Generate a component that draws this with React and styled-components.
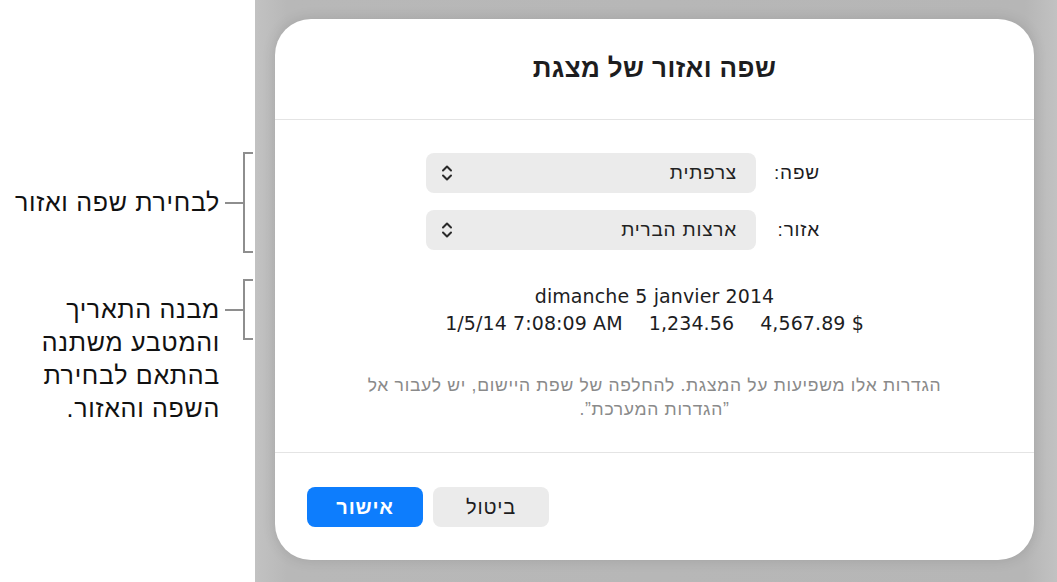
import React from 'react';
import styled, { createGlobalStyle } from 'styled-components';

const Global = createGlobalStyle`
  html, body {
    margin: 0;
    padding: 0;
    background: #ffffff;
  }
  body {
    font-family: "Liberation Sans", Arial, sans-serif;
    color: #1d1d1f;
  }
`;

const Page = styled.div`
  display: flex;
  width: 1057px;
  height: 582px;
  overflow: hidden;
`;

const Notes = styled.div`
  width: 255px;
  flex: none;
  display: flex;
  flex-direction: column;
  gap: 26px;
  padding-top: 152px;
  box-sizing: border-box;
  background: #ffffff;
`;

const NoteRow = styled.div`
  display: flex;
  direction: ltr;
  justify-content: flex-end;
  align-items: flex-start;
  padding-right: 2px;
`;

const NoteText = styled.div`
  direction: rtl;
  text-align: right;
  font-size: 25px;
  letter-spacing: 0.7px;
  line-height: 33px;
  color: #111;
  margin-top: ${({ $h }) => $h / 2 - 16.5}px;
`;

const Tick = styled.div`
  width: 18px;
  height: 2px;
  background: #8e8e8e;
  margin-left: 5px;
  margin-top: ${({ $h }) => $h / 2 - 1}px;
`;

const Bracket = styled.div`
  width: 10px;
  height: ${({ $h }) => $h}px;
  box-sizing: border-box;
  border: 2px solid #8e8e8e;
  border-right: none;
`;

const Stage = styled.div`
  flex: 1;
  background: linear-gradient(90deg, #c2c2c2 0%, #b8b8b8 4%, #b6b6b6 96%, #c2c2c2 100%);
  padding: 19px 23px 22px 20px;
  display: flex;
`;

const Dialog = styled.div`
  direction: rtl;
  flex: 1;
  background: #ffffff;
  border-radius: 36px;
  box-shadow: 0 0 14px rgba(0, 0, 0, 0.12);
  display: flex;
  flex-direction: column;
  overflow: hidden;
`;

const Header = styled.div`
  height: 101px;
  display: flex;
  align-items: center;
  justify-content: center;
  border-bottom: 1px solid #e4e4e4;
  padding-bottom: 2px;
  box-sizing: border-box;
`;

const Title = styled.h1`
  margin: 0;
  font-size: 26px;
  letter-spacing: 0.4px;
  font-weight: 700;
  color: #1d1d1f;
`;

const Body = styled.div`
  display: flex;
  flex-direction: column;
  padding: 33px 0 31px;
  border-bottom: 1px solid #e4e4e4;
`;

const Form = styled.div`
  align-self: flex-start;
  margin-right: 214px;
  display: grid;
  grid-template-columns: 64px 330px;
  grid-auto-rows: 40px;
  row-gap: 17px;
  align-items: center;
`;

const Label = styled.div`
  font-size: 19px;
  letter-spacing: 0.8px;
  text-align: right;
`;

const Popup = styled.div`
  height: 40px;
  border-radius: 8px;
  background: #ebebeb;
  display: flex;
  align-items: center;
  justify-content: space-between;
  padding: 0 19px 0 15px;
  box-sizing: border-box;
  font-size: 19px;
  letter-spacing: 0.8px;
  color: #222;
`;

const Sample = styled.div`
  margin-top: 33px;
  display: flex;
  flex-direction: column;
  align-items: center;
  font-family: "DejaVu Sans", "Liberation Sans", sans-serif;
  font-size: 19px;
  letter-spacing: 0.1px;
  line-height: 27px;
  color: #1d1d1f;
`;

const SampleLine = styled.div`
  direction: ltr;
  display: flex;
  gap: ${({ $gap }) => $gap || 0}px;
`;

const Hint = styled.p`
  margin: 36px 0 0;
  text-align: center;
  font-size: 17.5px;
  letter-spacing: 0.7px;
  line-height: 24px;
  color: #8a8a8a;
`;

const Footer = styled.div`
  display: flex;
  justify-content: flex-end;
  gap: 10px;
  padding: 34px 32px 0;
`;

const Button = styled.button`
  width: 116px;
  height: 40px;
  border: none;
  border-radius: 8px;
  font-family: inherit;
  font-size: 20px;
  letter-spacing: 0.8px;
  font-weight: ${({ $primary }) => ($primary ? 700 : 400)};
  background: ${({ $primary }) => ($primary ? '#0d7dfd' : '#ebebeb')};
  color: ${({ $primary }) => ($primary ? '#ffffff' : '#1d1d1f')};
`;

const Chevrons = () => (
  <svg width="12" height="18" viewBox="0 0 12 18" fill="none">
    <path d="M2 6.5 L6 2.5 L10 6.5" stroke="#2a2a2a" strokeWidth="2" strokeLinecap="round" strokeLinejoin="round" />
    <path d="M2 11.5 L6 15.5 L10 11.5" stroke="#2a2a2a" strokeWidth="2" strokeLinecap="round" strokeLinejoin="round" />
  </svg>
);

const Annotation = ({ h, children }) => (
  <NoteRow>
    <NoteText $h={h}>{children}</NoteText>
    <Tick $h={h} />
    <Bracket $h={h} />
  </NoteRow>
);

export default function App() {
  return (
    <Page>
      <Global />
      <Notes>
        <Annotation h={101}>לבחירת שפה ואזור</Annotation>
        <Annotation h={61}>
          מבנה התאריך
          <br />
          והמטבע משתנה
          <br />
          בהתאם לבחירת
          <br />
          השפה והאזור.
        </Annotation>
      </Notes>
      <Stage>
        <Dialog>
          <Header>
            <Title>שפה ואזור של מצגת</Title>
          </Header>
          <Body>
            <Form>
              <Label>שפה:</Label>
              <Popup>
                <span>צרפתית</span>
                <Chevrons />
              </Popup>
              <Label>אזור:</Label>
              <Popup>
                <span>ארצות הברית</span>
                <Chevrons />
              </Popup>
            </Form>
            <Sample>
              <SampleLine>dimanche 5 janvier 2014</SampleLine>
              <SampleLine $gap={26}>
                <span>1/5/14 7:08:09 AM</span>
                <span>1,234.56</span>
                <span>4,567.89 $</span>
              </SampleLine>
            </Sample>
            <Hint>
              הגדרות אלו משפיעות על המצגת. להחלפה של שפת היישום, יש לעבור אל
              <br />
              ”הגדרות המערכת”.
            </Hint>
          </Body>
          <Footer>
            <Button>ביטול</Button>
            <Button $primary>אישור</Button>
          </Footer>
        </Dialog>
      </Stage>
    </Page>
  );
}
